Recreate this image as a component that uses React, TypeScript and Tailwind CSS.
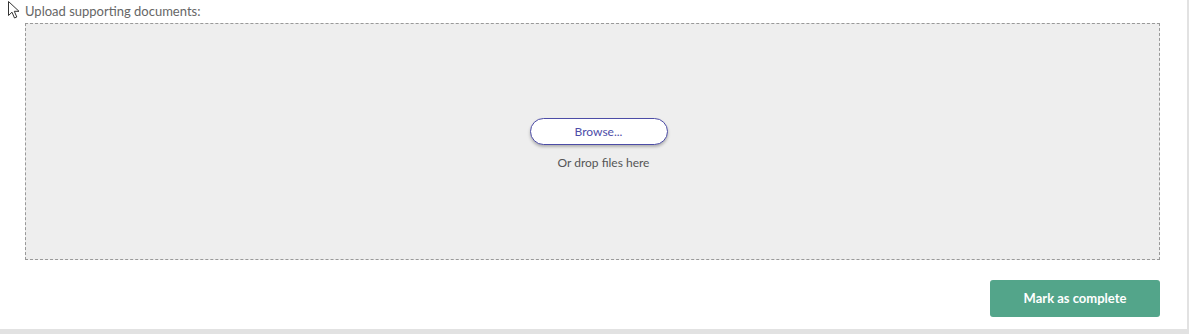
import React from "react";

export default function App() {
  return (
    <div className="w-[1189px] h-[334px] bg-[#e2e2e2] overflow-hidden" style={{ fontFamily: "Lato, 'Open Sans', sans-serif" }}>
      <div className="w-[1187px] h-[329px] bg-white relative">
        <svg className="absolute left-[7px] top-[0px]" width="14" height="20" viewBox="0 0 14 20">
          <path d="M1.5 1.5 L1.5 15.5 L5 12.2 L7.5 18 L9.8 17 L7.3 11.3 L12 11.3 Z" fill="white" stroke="#333" strokeWidth="1" strokeLinejoin="round" />
        </svg>
        <div className="pl-[25px] pt-[1px] h-[23px] text-[13px] leading-[20px] text-[#666]">Upload supporting documents:</div>
        <div className="ml-[25px] w-[1135px] h-[237px] bg-[#eeeeee] border border-dashed border-[#999] flex flex-col items-center pt-[94px]">
          <button className="ml-[12px] w-[138px] h-[27px] rounded-full bg-white border border-[#4c4ca6] text-[#4d4da8] text-[12px] shadow-[0_2px_3px_rgba(0,0,0,0.25)]">
            Browse...
          </button>
          <div className="ml-[22px] mt-[10px] text-[12px] leading-[16px] text-[#555]">Or drop files here</div>
        </div>
        <div className="flex justify-end pr-[27px] mt-[20px]">
          <button className="w-[170px] h-[37px] rounded-[3px] bg-[#53a58a] text-white text-[13px] font-bold">Mark as complete</button>
        </div>
      </div>
    </div>
  );
}
